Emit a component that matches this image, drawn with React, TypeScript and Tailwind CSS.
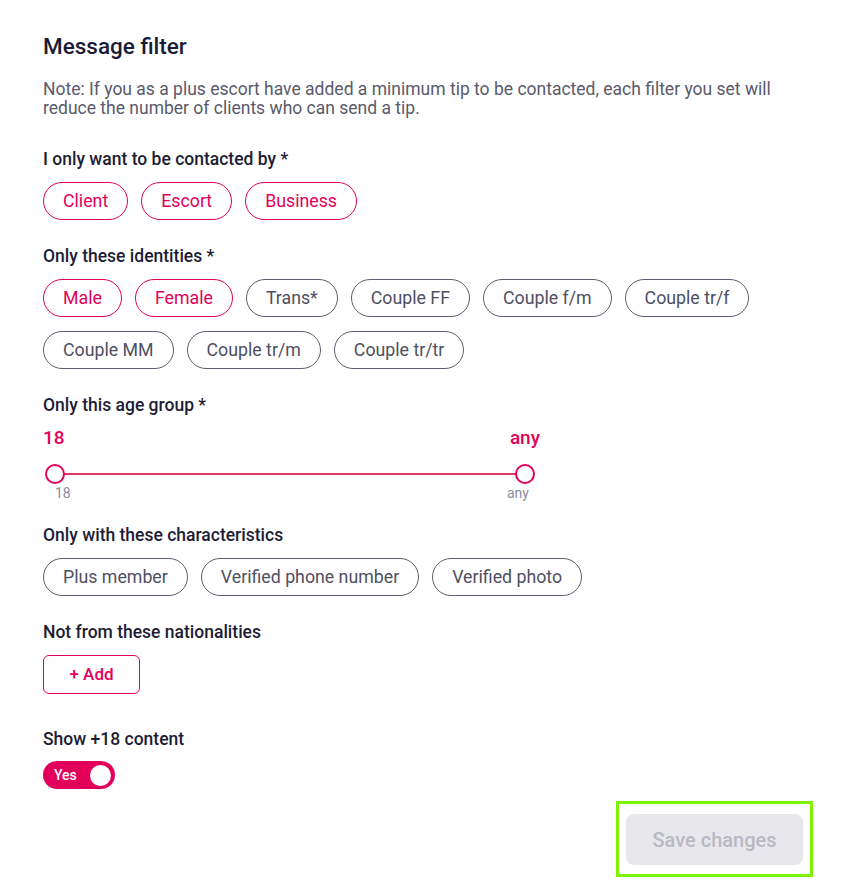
import React from "react";

function Chip({ label, active }: { label: string; active?: boolean }) {
  return (
    <button
      className={
        "h-[38px] rounded-full border px-[19px] text-[17.75px] leading-[20px] " +
        (active
          ? "border-[#e3005a] text-[#e3005a]"
          : "border-[#5e5e6e] text-[#4f4f61]")
      }
    >
      {label}
    </button>
  );
}

function Label({ children, className = "" }: { children: React.ReactNode; className?: string }) {
  return (
    <div className={"text-[17.5px] font-medium leading-[24px] text-[#1d1d35] " + className}>
      {children}
    </div>
  );
}

export default function App() {
  return (
    <div className="min-h-[881px] w-[846px] bg-white pl-[43px] pr-[43px] pt-[32px] font-['Roboto',sans-serif]">
      <h1 className="text-[22.5px] font-medium leading-[28px] text-[#1b1b36]">Message filter</h1>
      <p className="mt-[20px] text-[17.5px] leading-[19px] text-[#5a5a6b]">
        Note: If you as a plus escort have added a minimum tip to be contacted, each filter you set will
        reduce the number of clients who can send a tip.
      </p>

      <Label className="mt-[29px]">I only want to be contacted by *</Label>
      <div className="mt-[11px] flex flex-wrap gap-x-[13px] gap-y-[14px]">
        <Chip label="Client" active />
        <Chip label="Escort" active />
        <Chip label="Business" active />
      </div>

      <Label className="mt-[24px]">Only these identities *</Label>
      <div className="mt-[11px] flex flex-wrap gap-x-[13px] gap-y-[14px]">
        <Chip label="Male" active />
        <Chip label="Female" active />
        <Chip label="Trans*" />
        <Chip label="Couple FF" />
        <Chip label="Couple f/m" />
        <Chip label="Couple tr/f" />
        <Chip label="Couple MM" />
        <Chip label="Couple tr/m" />
        <Chip label="Couple tr/tr" />
      </div>

      <Label className="mt-[24px]">Only this age group *</Label>
      <div className="mt-[9px] w-[497px]">
        <div className="flex justify-between text-[19px] font-medium leading-[24px] text-[#e3005a]">
          <span>18</span>
          <span>any</span>
        </div>
        <div className="relative mt-[14px] h-[20px] w-[492px]">
          <div className="absolute left-[10px] right-[10px] top-[9px] h-[2px] bg-[#ea3560]" />
          <div className="absolute left-[2px] top-0 h-[20px] w-[20px] rounded-full border-2 border-[#e3005a] bg-white" />
          <div className="absolute right-[0px] top-0 h-[20px] w-[20px] rounded-full border-2 border-[#e3005a] bg-white" />
        </div>
        <div className="relative mt-[1px] h-[16px] w-[492px] text-[14px] leading-[16px] text-[#8d8d9c]">
          <span className="absolute left-[12px] top-0">18</span>
          <span className="absolute left-[464px] top-0">any</span>
        </div>
      </div>

      <Label className="mt-[22px]">Only with these characteristics</Label>
      <div className="mt-[11px] flex flex-wrap gap-x-[13px] gap-y-[14px]">
        <Chip label="Plus member" />
        <Chip label="Verified phone number" />
        <Chip label="Verified photo" />
      </div>

      <Label className="mt-[24px]">Not from these nationalities</Label>
      <button className="mt-[11px] h-[39px] w-[97px] rounded-[6px] border border-[#e3005a] text-[17px] font-medium text-[#e3005a]">
        + Add
      </button>

      <Label className="mt-[33px]">Show +18 content</Label>
      <div className="mt-[10px] flex h-[28px] w-[72px] items-center justify-between rounded-full bg-[#e3005a] pl-[11px] pr-[4px]">
        <span className="text-[14px] font-medium leading-[16px] text-white">Yes</span>
        <span className="h-[21px] w-[21px] rounded-full bg-white" />
      </div>

      <div className="-mr-[10px] mt-[12px] flex justify-end">
        <div className="border-[3px] border-[#7ef200] pb-[9px] pl-[7px] pr-[7px] pt-[10px]">
          <button className="h-[51px] w-[177px] rounded-[8px] bg-[#e8e8ec] text-[20px] font-medium text-[#b9b9c3]">
            Save changes
          </button>
        </div>
      </div>
    </div>
  );
}
